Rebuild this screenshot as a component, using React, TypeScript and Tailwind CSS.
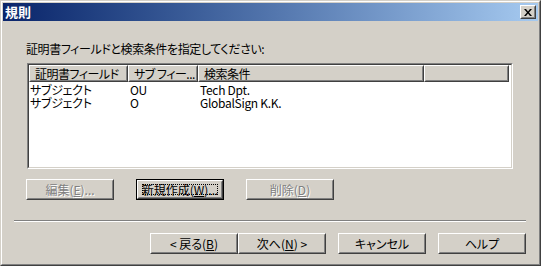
import React from "react";

const font = "font-['Noto_Sans_CJK_JP','Noto_Sans',sans-serif] [font-feature-settings:'palt']";

function Raised({ children, className = "" }: { children: React.ReactNode; className?: string }) {
  return (
    <div className={`border border-t-white border-l-white border-r-[#404040] border-b-[#404040] ${className}`}>
      <div className="h-full w-full border border-t-[#d4d0c8] border-l-[#d4d0c8] border-r-[#808080] border-b-[#808080]">
        {children}
      </div>
    </div>
  );
}

function Mnemonic({ before, letter, after }: { before: string; letter: string; after: string }) {
  return (
    <>
      {before}
      <span className="underline underline-offset-[1px]">{letter}</span>
      {after}
    </>
  );
}

function Button({
  children,
  disabled,
  focused,
  className = "",
}: {
  children: React.ReactNode;
  disabled?: boolean;
  focused?: boolean;
  className?: string;
}) {
  const text = disabled ? "text-[#808080] [text-shadow:1px_1px_0_#ffffff]" : "text-black";
  const inner = (
    <Raised className="h-full w-full">
      <div className={`relative flex h-full items-center justify-center text-[12px] leading-[14px] ${text}`}>
        {focused && <div className="absolute inset-x-[3px] inset-y-[2px] border border-dotted border-black" />}
        <span className="relative">{children}</span>
      </div>
    </Raised>
  );
  if (focused) {
    return <div className={`h-[21px] w-[88px] border border-black ${className}`}>{inner}</div>;
  }
  return <div className={`h-[21px] w-[88px] ${className}`}>{inner}</div>;
}

const columns = [
  { label: "証明書フィールド", w: "w-[99px]" },
  { label: "サブ フィー...", w: "w-[70px]" },
  { label: "検索条件", w: "w-[226px]" },
  { label: "", w: "w-[85px]" },
];

const rows = [
  ["サブジェクト", "OU", "Tech Dpt."],
  ["サブジェクト", "O", "GlobalSign K.K."],
];

export default function App() {
  return (
    <div className={`h-[266px] w-[541px] bg-[#d4d0c8] ${font}`}>
      <div className="h-full w-full border border-t-[#d4d0c8] border-l-[#d4d0c8] border-r-[#404040] border-b-[#404040]">
        <div className="h-full w-full border border-t-white border-l-white border-r-[#808080] border-b-[#808080] p-px">
          {/* title bar */}
          <div className="flex h-[18px] items-center justify-between bg-gradient-to-r from-[#0a246a] to-[#a6caf0] pl-[2px] pr-[2px]">
            <span className="text-[13px] font-bold leading-[16px] text-white">規則</span>
            <Raised className="h-[14px] w-[16px]">
              <div className="flex h-full items-center justify-center bg-[#d4d0c8]">
                <svg width="8" height="7" viewBox="0 0 8 7">
                  <path d="M0 0h2l2 2.5 2-2.5h2L5 3.5 8 7H6L4 4.5 2 7H0l3-3.5z" fill="#000" />
                </svg>
              </div>
            </Raised>
          </div>

          {/* label */}
          <div className="ml-[23px] mt-[21px] h-[14px] text-[12px] leading-[14px] tracking-[-0.4px] text-black">
            証明書フィールドと検索条件を指定してください:
          </div>

          {/* list view */}
          <div className="ml-[24px] mt-[7px] h-[106px] w-[486px] border border-t-[#808080] border-l-[#808080] border-r-white border-b-white">
            <div className="flex h-full w-full flex-col border border-t-[#404040] border-l-[#404040] border-r-[#d4d0c8] border-b-[#d4d0c8] bg-white">
              <div className="flex h-[17px] shrink-0">
                {columns.map((c, i) => (
                  <Raised key={i} className={`h-[17px] shrink-0 ${c.w}`}>
                    <div className="h-full whitespace-nowrap bg-[#d4d0c8] pl-[4px] text-[12px] leading-[13px] tracking-[-0.5px] text-black">
                      {c.label}
                    </div>
                  </Raised>
                ))}
              </div>
              <div className="pt-px">
                {rows.map((r, i) => (
                  <div key={i} className="flex h-[13px] text-[12px] leading-[13px] tracking-[-0.3px] text-black">
                    <div className="w-[99px] pl-[1px]">{r[0]}</div>
                    <div className="w-[70px] pl-[2px]">{r[1]}</div>
                    <div className="w-[226px] pl-[2px]">{r[2]}</div>
                  </div>
                ))}
              </div>
            </div>
          </div>

          {/* list buttons */}
          <div className="ml-[23px] mt-[10px] flex">
            <Button disabled>
              <Mnemonic before="編集(" letter="E" after=")..." />
            </Button>
            <Button focused className="ml-[22px]">
              <Mnemonic before="新規作成(" letter="W" after=")..." />
            </Button>
            <Button disabled className="ml-[22px]">
              <Mnemonic before="削除(" letter="D" after=")" />
            </Button>
          </div>

          {/* separator */}
          <div className="ml-[11px] mt-[20px] h-[2px] w-[512px] border-t border-b border-t-[#808080] border-b-white" />

          {/* wizard buttons */}
          <div className="ml-[147px] mt-[11px] flex">
            <Button>
              &lt; <Mnemonic before="戻る(" letter="B" after=")" />
            </Button>
            <Button>
              <Mnemonic before="次へ(" letter="N" after=")" /> &gt;
            </Button>
            <Button className="ml-[12px]">キャンセル</Button>
            <Button className="ml-[12px]">ヘルプ</Button>
          </div>
        </div>
      </div>
    </div>
  );
}
